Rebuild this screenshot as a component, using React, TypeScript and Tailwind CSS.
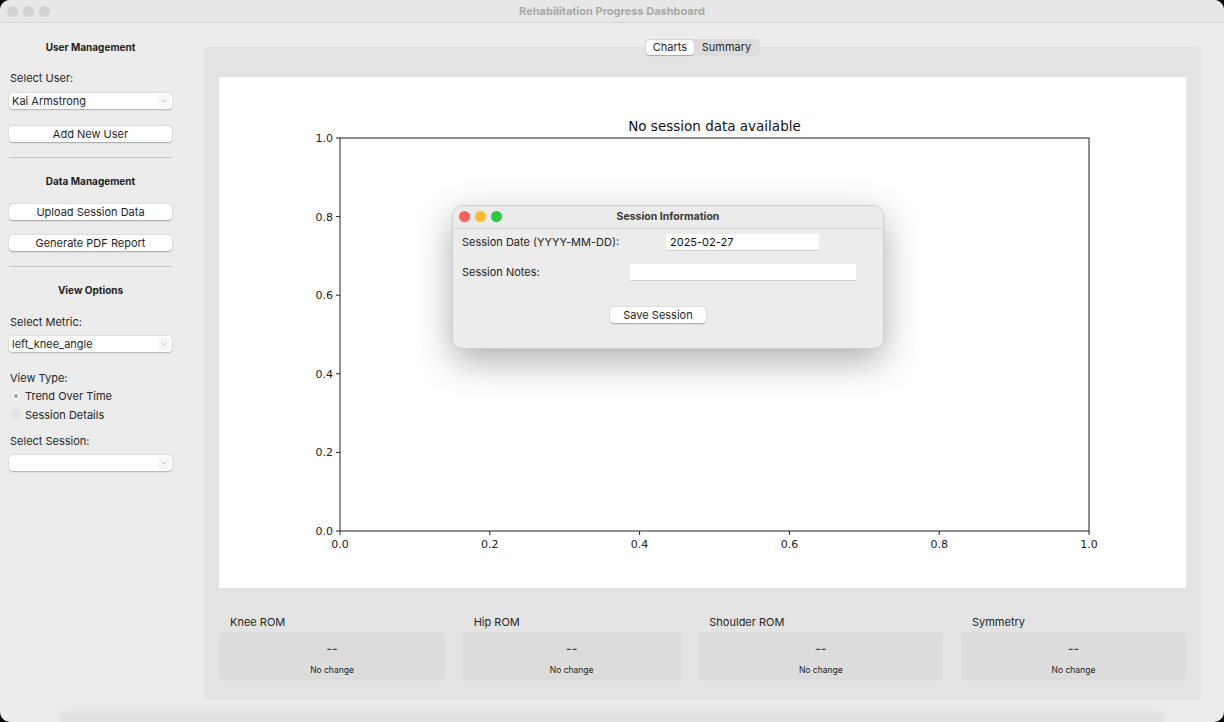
import { ChevronDown } from 'lucide-react';

const ui = { fontFamily: 'Inter, "Liberation Sans", sans-serif' };
const mpl = 'DejaVu Sans, sans-serif';

function Select({ value }: { value: string }) {
  return (
    <div className="flex h-[16px] items-center justify-between rounded-[4px] bg-white pl-[3px] pr-[2px] shadow-[0_0.5px_1.5px_rgba(0,0,0,0.25)]">
      <span className="text-[11px] leading-none text-[#1f1f1f]">{value}</span>
      <span className="flex h-[12px] w-[12px] items-center justify-center rounded-[3px] bg-[#f6f6f6]">
        <ChevronDown size={8} strokeWidth={1.5} className="text-[#9a9a9a]" />
      </span>
    </div>
  );
}

function Button({ label, className = '' }: { label: string; className?: string }) {
  return (
    <div className={`flex h-[16px] items-center justify-center rounded-[4px] bg-white text-[11px] leading-none text-[#1f1f1f] shadow-[0_0.5px_1.5px_rgba(0,0,0,0.3)] ${className}`}>
      {label}
    </div>
  );
}

function Heading({ text, className = '' }: { text: string; className?: string }) {
  return <div className={`text-center text-[10px] font-bold leading-[12px] text-[#1f1f1f] ${className}`}>{text}</div>;
}

function Label({ text, className = '' }: { text: string; className?: string }) {
  return <div className={`text-[11px] leading-[14px] text-[#262626] ${className}`}>{text}</div>;
}

function Sidebar() {
  return (
    <aside className="w-[180px] shrink-0 pl-[9px] pr-[8px] pt-[18px]">
      <Heading text="User Management" />
      <Label text="Select User:" className="ml-[1px] mt-[18px]" />
      <div className="mt-[8px]"><Select value="Kai Armstrong" /></div>
      <Button label="Add New User" className="mt-[17px]" />
      <div className="mt-[15px] h-px bg-[#c4c4c4]" />
      <Heading text="Data Management" className="mt-[17px]" />
      <Button label="Upload Session Data" className="mt-[17px]" />
      <Button label="Generate PDF Report" className="mt-[15px]" />
      <div className="mt-[15px] h-px bg-[#c4c4c4]" />
      <Heading text="View Options" className="mt-[17px]" />
      <Label text="Select Metric:" className="ml-[1px] mt-[19px]" />
      <div className="mt-[7px]"><Select value="left_knee_angle" /></div>
      <Label text="View Type:" className="ml-[1px] mt-[19px]" />
      <div className="mt-[2px] flex h-[18px] items-center gap-[4px] pl-[2px]">
        <span className="flex h-[10px] w-[10px] items-center justify-center rounded-full bg-[#f4f4f4] shadow-[0_0_1px_rgba(0,0,0,0.25)]">
          <span className="h-[4px] w-[4px] rounded-full bg-[#a8a8a8]" />
        </span>
        <span className="text-[11px] leading-none text-[#262626]">Trend Over Time</span>
      </div>
      <div className="mt-[1px] flex h-[18px] items-center gap-[4px] pl-[2px]">
        <span className="h-[10px] w-[10px] rounded-full bg-[#e4e4e4]" />
        <span className="text-[11px] leading-none text-[#262626]">Session Details</span>
      </div>
      <Label text="Select Session:" className="ml-[1px] mt-[10px]" />
      <div className="mt-[7px]"><Select value="" /></div>
    </aside>
  );
}

function Chart() {
  const L = 121, R = 870, T = 61, B = 454;
  const ticks = [0, 0.2, 0.4, 0.6, 0.8, 1.0];
  return (
    <svg width="967" height="511" className="block">
      <rect width="967" height="511" fill="#ffffff" />
      <text x={(L + R) / 2} y={54} textAnchor="middle" fontFamily={mpl} fontSize="13.5" fill="#111">
        No session data available
      </text>
      <rect x={L} y={T} width={R - L} height={B - T} fill="none" stroke="#222" strokeWidth="1" />
      {ticks.map((t) => {
        const y = B - t * (B - T);
        const x = L + t * (R - L);
        return (
          <g key={t}>
            <line x1={L - 4} x2={L} y1={y} y2={y} stroke="#222" strokeWidth="1" />
            <text x={L - 7} y={y + 4} textAnchor="end" fontFamily={mpl} fontSize="11" fill="#222">
              {t.toFixed(1)}
            </text>
            <line x1={x} x2={x} y1={B} y2={B + 4} stroke="#222" strokeWidth="1" />
            <text x={x} y={B + 17} textAnchor="middle" fontFamily={mpl} fontSize="11" fill="#222">
              {t.toFixed(1)}
            </text>
          </g>
        );
      })}
    </svg>
  );
}

const metrics = [
  { name: 'Knee ROM', w: 'w-[226px]' },
  { name: 'Hip ROM', w: 'w-[218px]' },
  { name: 'Shoulder ROM', w: 'w-[245px]' },
  { name: 'Symmetry', w: 'w-[225px]' },
];

function MetricCards() {
  return (
    <div className="mt-[27px] flex justify-between">
      {metrics.map((m) => (
        <div key={m.name} className={m.w}>
          <div className="pl-[11px] text-[11px] leading-[14px] text-[#262626]">{m.name}</div>
          <div className="mt-[3px] flex h-[49px] flex-col items-center rounded-[4px] bg-[#dcdcdc] pt-[9px]">
            <span className="text-[12px] font-semibold leading-[16px] text-[#444]">--</span>
            <span className="mt-[8px] text-[8.5px] leading-[10px] text-[#222]">No change</span>
          </div>
        </div>
      ))}
    </div>
  );
}

function Dialog() {
  return (
    <div className="absolute left-[452px] top-[205px] h-[144px] w-[432px] overflow-hidden rounded-[10px] border border-[#cfcfcf] bg-[#ececec] shadow-[0_12px_36px_rgba(0,0,0,0.32)]">
      <div className="relative flex h-[23px] items-center justify-center border-b border-[#d8d8d8] bg-[#ebebeb]">
        <div className="absolute left-[6px] top-[5px] flex gap-[5px]">
          <span className="h-[11px] w-[11px] rounded-full bg-[#fe5f57]" />
          <span className="h-[11px] w-[11px] rounded-full bg-[#febc2e]" />
          <span className="h-[11px] w-[11px] rounded-full bg-[#28c840]" />
        </div>
        <span className="text-[10.5px] font-bold text-[#3a3a3a]">Session Information</span>
      </div>
      <div className="px-[9px] pt-[5px]">
        <div className="flex h-[17px] items-center">
          <span className="w-[204px] text-[11px] text-[#262626]">Session Date (YYYY-MM-DD):</span>
          <div className="flex h-[17px] w-[153px] items-center border-b border-[#d0d0d0] bg-white pl-[4px] text-[11px] text-[#111]">2025-02-27</div>
        </div>
        <div className="mt-[13px] flex h-[17px] items-center">
          <span className="w-[168px] text-[11px] text-[#262626]">Session Notes:</span>
          <div className="h-[17px] w-[226px] border-b border-[#d0d0d0] bg-white" />
        </div>
        <div className="mt-[26px] flex">
          <Button label="Save Session" className="ml-[148px] w-[96px]" />
        </div>
      </div>
    </div>
  );
}

export default function App() {
  return (
    <div className="h-[722px] w-[1224px] overflow-hidden bg-black" style={ui}>
      <div className="relative flex h-full flex-col overflow-hidden rounded-[10px] bg-[#ececec]">
        <div className="relative flex h-[23px] shrink-0 items-center justify-center border-b border-[#d6d6d6] bg-[#e7e7e7]">
          <div className="absolute left-[7px] top-[6px] flex gap-[5px]">
            <span className="h-[11px] w-[11px] rounded-full bg-[#d2d2d2]" />
            <span className="h-[11px] w-[11px] rounded-full bg-[#d2d2d2]" />
            <span className="h-[11px] w-[11px] rounded-full bg-[#d2d2d2]" />
          </div>
          <span className="text-[11px] font-bold text-[#a9a9a9]">Rehabilitation Progress Dashboard</span>
        </div>

        <div className="flex flex-1">
          <Sidebar />
          <main className="mb-[22px] ml-[24px] mr-[23px] mt-[24px] flex-1 rounded-[4px] bg-[#e3e3e3] px-[15px]">
            <div className="-mt-[8px] flex justify-center">
              <div className="flex h-[17px] items-center rounded-[5px] bg-[#dcdcdc] p-[1px]">
                <span className="flex h-[15px] w-[48px] items-center justify-center rounded-[4px] bg-white text-[11px] text-[#1f1f1f] shadow-[0_0.5px_1px_rgba(0,0,0,0.25)]">Charts</span>
                <span className="flex h-[15px] w-[65px] items-center justify-center text-[11px] text-[#2a2a2a]">Summary</span>
              </div>
            </div>
            <div className="mt-[21px]">
              <Chart />
            </div>
            <MetricCards />
          </main>
        </div>

        <div className="pointer-events-none absolute bottom-0 left-[60px] right-[60px] h-[14px] bg-gradient-to-b from-transparent to-[#d8d8d8] blur-[3px]" />
        <Dialog />
      </div>
    </div>
  );
}
